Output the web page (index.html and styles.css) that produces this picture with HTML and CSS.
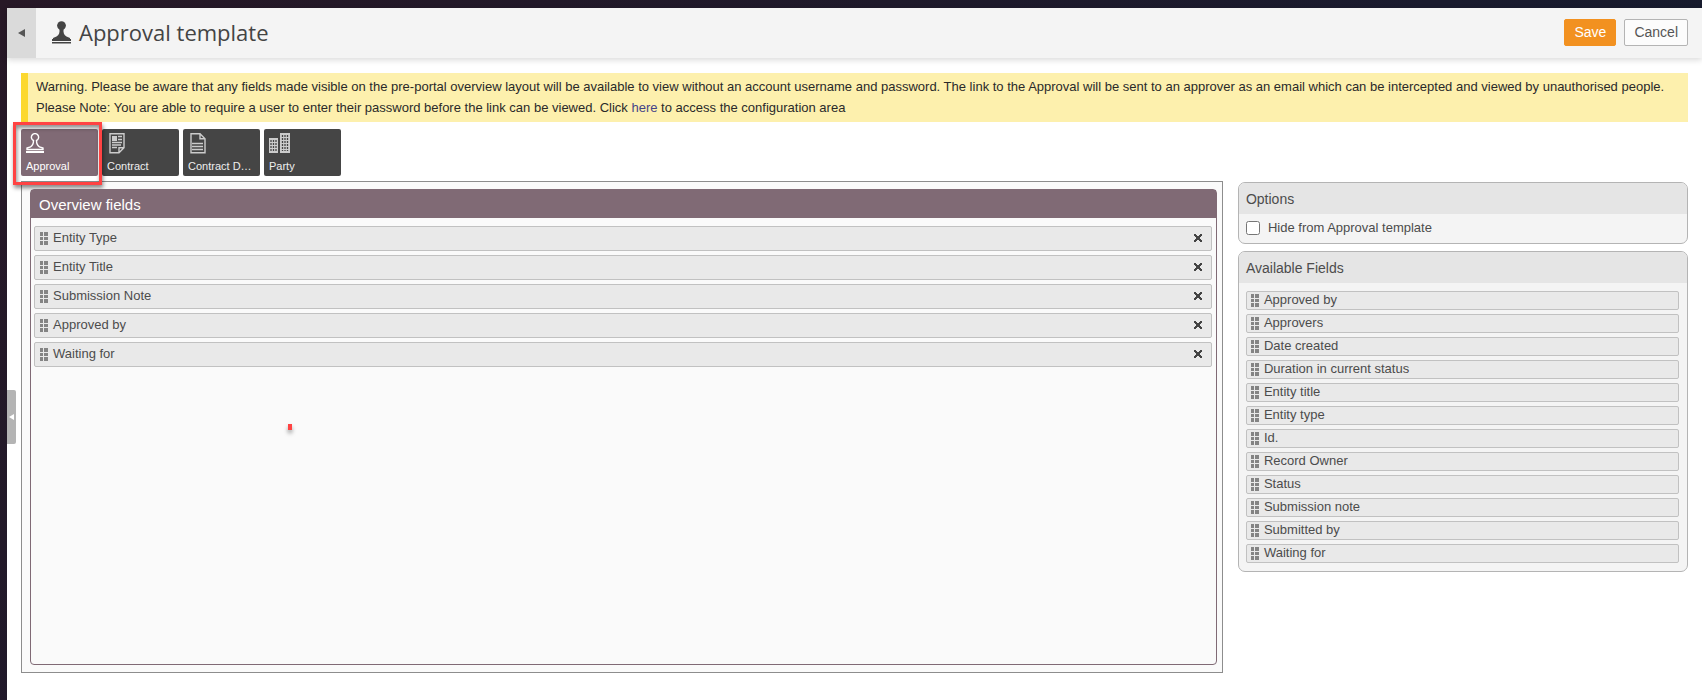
FILE: index.html
```html
<!DOCTYPE html>
<html lang="en">
<head>
    <meta charset="UTF-8">
    <meta name="viewport" content="width=device-width, initial-scale=1.0">
    <title>Approval template</title>
    <link rel="stylesheet" href="styles.css">
</head>
<body>
    <div class="page">
        <header class="header">
            <button class="back" aria-label="Back"><svg width="8" height="8" viewBox="0 0 8 8"><path d="M0 4L7 0v8z" fill="#555"/></svg></button>
            <svg class="header-icon" width="19" height="23" viewBox="0 0 19 23" fill="#444">
                <circle cx="9.5" cy="4.6" r="4.4"/>
                <path d="M7.500 8h4c-.2 4 .4 6 3 7.500l3.500 1.500v2H1v-2l3.500-1.500c2.600-1.500 3.200-3.500 3-7.500z"/>
                <path d="M0 18h19v2H0zM0 21h19v1.500H0z"/>
            </svg>
            <h1>Approval template</h1>
            <button class="btn btn-save">Save</button>
            <button class="btn btn-cancel">Cancel</button>
        </header>

        <main class="content">
            <div class="warning">
                <p>Warning. Please be aware that any fields made visible on the pre-portal overview layout will be available to view without an account username and password. The link to the Approval will be sent to an approver as an email which can be intercepted and viewed by unauthorised people.</p>
                <p>Please Note: You are able to require a user to enter their password before the link can be viewed. Click <a href="#">here</a> to access the configuration area</p>
            </div>

            <nav class="tabs">
                <div class="tab-wrap">
                    <button class="tab active">
                        <svg width="20" height="21" viewBox="0 0 20 21" fill="none" stroke="#fff" stroke-width="1.4">
                            <path d="M7.500 7.500a3.600 3.600 0 1 1 3 0c0 4 .8 5 3 6.300l3.500 1.200v1.500H1V15l3.500-1.200c2.200-1.300 3-2.300 3-6.300z"/>
                            <path d="M0 19h18" stroke-width="2"/>
                        </svg>
                        <span>Approval</span>
                    </button>
                    <div class="highlight"></div>
                </div>
                <button class="tab">
                    <svg width="20" height="21" viewBox="0 0 20 21" fill="none" stroke="#ccc" stroke-width="1.400">
                        <path d="M3 .700h14v14l-5 5H3zM17 14.700h-5v5"/>
                        <path d="M5 3h5v5H5z" fill="#ccc" stroke="none"/>
                        <path d="M11 3.500h4M11 6.500h4M5 9.500h10M5 12h9M5 14.500h5"/>
                    </svg>
                    <span>Contract</span>
                </button>
                <button class="tab">
                    <svg width="20" height="21" viewBox="0 0 20 21" fill="none" stroke="#ccc" stroke-width="1.400">
                        <path d="M3 .700h9l5 5v14H3zM12 .700v5h5"/>
                        <path d="M4 10.500h11M4 13.500h11M4 16.500h11"/>
                    </svg>
                    <span>Contract D…</span>
                </button>
                <button class="tab">
                    <svg width="22" height="21" viewBox="0 0 22 21" fill="#ccc">
                        <path d="M0 5h9v15H0zM11 0h10v20H11z"/>
                        <path d="M2 7v11M4.500 7v11M7 7v11M13.500 2v16M16 2v16M18.500 2v16" stroke="#454545" stroke-width="1.300" stroke-dasharray="2 1"/>
                    </svg>
                    <span>Party</span>
                </button>
            </nav>

            <div class="columns">
                <section class="canvas">
                    <div class="overview">
                        <h2>Overview fields</h2>
                        <ul class="fields">
                            <li><i class="grip"></i><span>Entity Type</span><button class="remove" aria-label="Remove Entity Type"></button></li>
                            <li><i class="grip"></i><span>Entity Title</span><button class="remove" aria-label="Remove Entity Title"></button></li>
                            <li><i class="grip"></i><span>Submission Note</span><button class="remove" aria-label="Remove Submission Note"></button></li>
                            <li><i class="grip"></i><span>Approved by</span><button class="remove" aria-label="Remove Approved by"></button></li>
                            <li><i class="grip"></i><span>Waiting for</span><button class="remove" aria-label="Remove Waiting for"></button></li>
                        </ul>
                        <div class="marker"></div>
                    </div>
                </section>

                <aside class="sidebar">
                    <section class="panel">
                        <h2>Options</h2>
                        <div class="option">
                            <input type="checkbox" id="hide">
                            <label for="hide">Hide from Approval template</label>
                        </div>
                    </section>
                    <section class="panel">
                        <h2>Available Fields</h2>
                        <ul class="fields available">
                            <li><i class="grip"></i><span>Approved by</span></li>
                            <li><i class="grip"></i><span>Approvers</span></li>
                            <li><i class="grip"></i><span>Date created</span></li>
                            <li><i class="grip"></i><span>Duration in current status</span></li>
                            <li><i class="grip"></i><span>Entity title</span></li>
                            <li><i class="grip"></i><span>Entity type</span></li>
                            <li><i class="grip"></i><span>Id.</span></li>
                            <li><i class="grip"></i><span>Record Owner</span></li>
                            <li><i class="grip"></i><span>Status</span></li>
                            <li><i class="grip"></i><span>Submission note</span></li>
                            <li><i class="grip"></i><span>Submitted by</span></li>
                            <li><i class="grip"></i><span>Waiting for</span></li>
                        </ul>
                    </section>
                </aside>
            </div>
        </main>

        <button class="drawer" aria-label="Open menu"><svg width="5" height="6" viewBox="0 0 5 6"><path d="M0 3l5-3v6z" fill="#fff"/></svg></button>
    </div>
</body>
</html>
```
FILE: styles.css
```css
* {
    box-sizing: border-box;
}

body {
    margin: 0;
    padding: 8px 0 0 7px;
    min-height: 100vh;
    background: linear-gradient(135deg, #271826, #1a1b2e 60%, #0f1a2b);
    font-family: Arial, "Liberation Sans", sans-serif;
    font-size: 13px;
    color: #4c4c4c;
}

h1, h2, p, ul {
    margin: 0;
    padding: 0;
    font-weight: normal;
}

button {
    font-family: inherit;
    border: 0;
    padding: 0;
    cursor: pointer;
}

.page {
    position: relative;
    min-height: calc(100vh - 8px);
    background: #fff;
}

/* header */
.header {
    display: flex;
    align-items: center;
    height: 50px;
    padding-right: 14px;
    background: #f4f4f4;
    box-shadow: 0 2px 6px rgba(0, 0, 0, 0.15);
}

.back {
    align-self: stretch;
    width: 29px;
    padding-bottom: 2px;
    background: #dadada;
}

.header-icon {
    margin: 0 8px 2px 16px;
}

.header h1 {
    flex: 1;
    padding-bottom: 3px;
    font-family: "Open Sans", sans-serif;
    font-size: 22px;
    color: #444;
}

.btn {
    height: 27px;
    margin-bottom: 2px;
    padding: 0 9px;
    border: 1px solid #b4b4b4;
    border-radius: 2px;
    font-size: 14px;
}

.btn-save {
    margin-right: 8px;
    border-color: #f29120;
    background: #f29120;
    color: #fff;
}

.btn-cancel {
    background: #fcfcfc;
    color: #555;
}

.content {
    padding: 15px 14px 27px;
}

.warning {
    padding: 3px 7px 4px 8px;
    border-left: 7px solid #fcd82f;
    background: #fdf0ad;
    color: #2a2a2a;
    line-height: 21px;
}

.warning a {
    color: #448;
    text-decoration: none;
}

/* entity tabs */
.tabs {
    display: flex;
    gap: 4px;
    margin: 7px 0 5px;
}

.tab-wrap {
    position: relative;
}

.tab {
    display: flex;
    flex-direction: column;
    justify-content: space-between;
    width: 77px;
    height: 47px;
    padding: 4px 5px;
    border-radius: 2px;
    background: #454545;
    color: #eee;
    font-size: 11px;
    text-align: left;
    white-space: nowrap;
}

.tab.active {
    background: #806a75;
    color: #fff;
}

.highlight {
    position: absolute;
    inset: -7px -4px -9px -8px;
    border: 3px solid #ff4343;
    box-shadow: 1px 3px 4px rgba(0, 0, 0, 0.45), inset 1px 3px 4px rgba(0, 0, 0, 0.45);
    pointer-events: none;
}

.columns {
    display: flex;
    align-items: flex-start;
    gap: 15px;
}

.canvas {
    flex: 1;
    padding: 7px 5px 7px 8px;
    border: 1px solid #8d8d8d;
    background: #fafafa;
}

.overview {
    position: relative;
    min-height: 476px;
    border: 1px solid #806a75;
    border-radius: 4px;
}

.overview h2 {
    padding: 1px 8px 0;
    background: #806a75;
    color: #fff;
    font-size: 15px;
    line-height: 27px;
}

.fields {
    display: flex;
    flex-direction: column;
    gap: 4px;
    padding: 8px 4px 8px 3px;
    list-style: none;
}

.fields li {
    display: flex;
    align-items: center;
    height: 25px;
    padding: 0 9px 0 5px;
    border: 1px solid #c1c1c1;
    border-radius: 2px;
    background: #e9e9e9;
}

.fields li span {
    flex: 1;
    padding-bottom: 2px;
}

/* six little squares */
.grip {
    width: 8px;
    height: 13px;
    margin-right: 5px;
    background:
        linear-gradient(#e9e9e9, #e9e9e9) 0 4px / 8px 1px no-repeat,
        linear-gradient(#e9e9e9, #e9e9e9) 0 8px / 8px 1px no-repeat,
        linear-gradient(#e9e9e9, #e9e9e9) 3px 0 / 1px 13px no-repeat,
        #848484;
}

.remove {
    width: 8px;
    height: 8px;
    margin-bottom: 2px;
    background:
        linear-gradient(45deg, transparent 41%, #444 41%, #444 59%, transparent 59%),
        linear-gradient(-45deg, transparent 41%, #444 41%, #444 59%, transparent 59%);
}

.marker {
    position: absolute;
    left: 257px;
    top: 234px;
    width: 4px;
    height: 6px;
    background: #ff4343;
    box-shadow: 0 3px 4px rgba(0, 0, 0, 0.4);
}

/* right column */
.sidebar {
    display: flex;
    flex-direction: column;
    flex: 0 0 27%;
    gap: 7px;
    padding-top: 1px;
}

.panel {
    overflow: hidden;
    border: 1px solid #b4b4b4;
    border-radius: 7px;
    background: #f4f4f4;
}

.panel h2 {
    padding: 1px 7px 0;
    background: #e5e5e5;
    font-size: 14px;
    line-height: 30px;
}

.option {
    display: flex;
    align-items: center;
    gap: 8px;
    height: 29px;
    padding: 0 7px 2px;
}

.option input {
    width: 14px;
    height: 14px;
    margin: 0;
}

.available {
    padding: 8px 8px 8px 7px;
}

.available li {
    height: 19px;
    padding: 0 4px;
}

.drawer {
    position: absolute;
    left: 0;
    top: 382px;
    display: flex;
    align-items: center;
    justify-content: center;
    width: 9px;
    height: 54px;
    border-radius: 0 2px 2px 0;
    background: #b4b4b4;
}
```
